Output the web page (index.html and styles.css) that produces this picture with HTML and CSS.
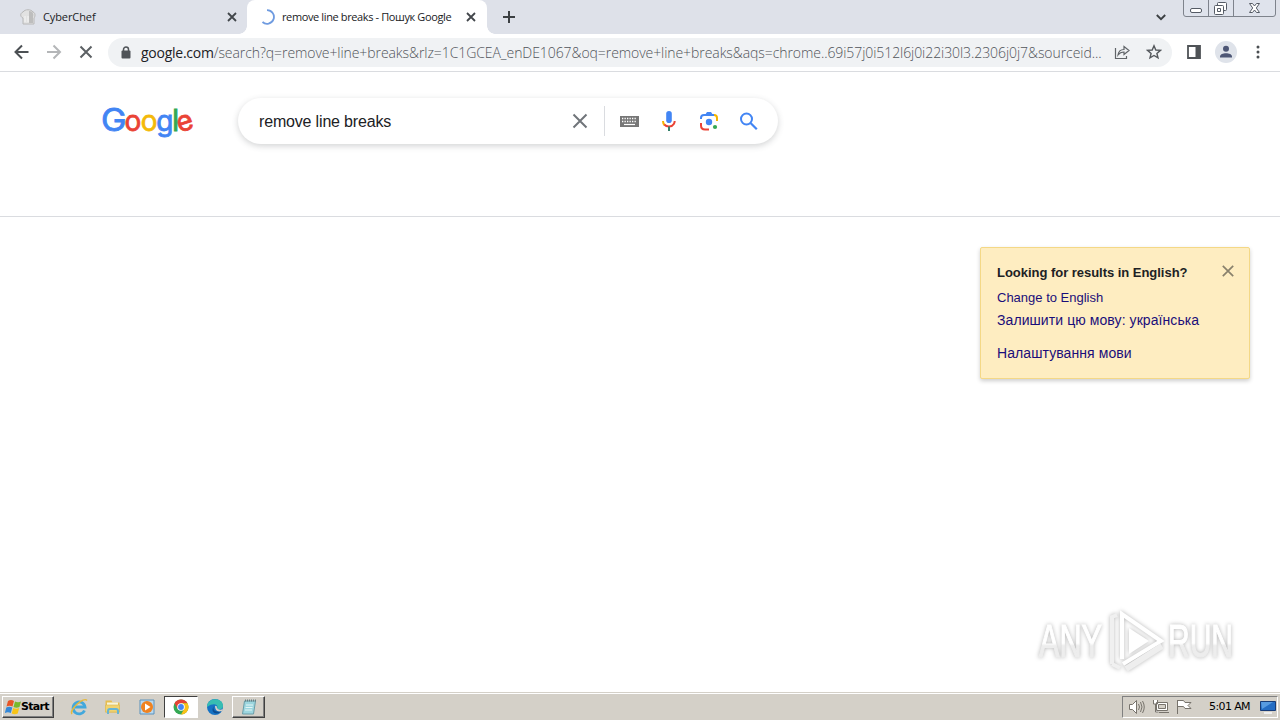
FILE: index.html
```html
<!DOCTYPE html>
<html lang="uk">
<head>
<meta charset="utf-8">
<title>remove line breaks - Пошук Google</title>
<link rel="stylesheet" href="styles.css">
</head>
<body>
<header class="tabs">
  <div class="tab">
    <svg class="fav" width="16" height="16" viewBox="0 0 16 16"><path d="M3 15V9C0 8 0 4 3 3c2-3 8-3 10 0 3 1 2 5 1 6v6z" fill="#e2e2e2" stroke="#b8b8b8"/><path d="M9 2c4 0 5 3 4 6v6H9z" fill="#bdbdbd"/><path d="M5 7v6M8 7v6" stroke="#f5f5f5"/></svg>
    <span class="tab-title cyber">CyberChef</span>
    <svg class="tab-x" width="10" height="10" viewBox="0 0 10 10"><path d="M1 1l8 8M9 1L1 9" stroke="#42464b" stroke-width="1.8"/></svg>
  </div>
  <div class="tab active">
    <svg class="fav" width="16" height="16" viewBox="0 0 16 16"><path d="M8 1.2A6.8 6.8 0 1 1 3.5 13" fill="none" stroke="#6f9be0" stroke-width="1.8"/></svg>
    <span class="tab-title query">remove line breaks - Пошук Google</span>
    <svg class="tab-x" width="10" height="10" viewBox="0 0 10 10"><path d="M1 1l8 8M9 1L1 9" stroke="#42464b" stroke-width="1.8"/></svg>
  </div>
  <svg class="plus" width="12" height="12" viewBox="0 0 12 12"><path d="M6 0v12M0 6h12" stroke="#3c4043" stroke-width="2"/></svg>
  <svg class="chevron" width="10" height="7" viewBox="0 0 10 7"><path d="M.8 1L5 5.2 9.2 1" fill="none" stroke="#3c4043" stroke-width="1.9"/></svg>
  <svg class="win" width="94" height="18" viewBox="0 0 94 18"><path d="M.5 0v14q0 2.500 2.500 2.500h87q2.500 0 2.500-2.500V0M25.500 0v16M50.500 0v16" fill="#dfe3ec" stroke="#7e838c"/><g fill="#fff" stroke="#555b65"><rect x="7.500" y="8.500" width="11" height="4" rx="1.500"/><rect x="34.500" y="2.500" width="9" height="8" rx="1"/><rect x="31.500" y="5.500" width="9" height="9" rx="1"/><path d="M34.500 8.500h3v3h-3z"/><path d="M66.500 3.500h3l2 2.500 2-2.500h3l-3.200 4.500 3.200 4.500h-3l-2-2.500-2 2.500h-3L69.700 8z"/></g></svg>
</header>
<nav class="toolbar">
  <svg class="nav-icons" width="84" height="16" viewBox="0 0 84 16" fill="none" stroke-width="2"><path d="M13.500 8H1M7 1.500L.5 8 7 14.500" stroke="#4c5054"/><path d="M32 8h12.500M38.500 1.500L45 8l-6.500 6.500" stroke="#b4b6b8"/><path d="M65.500 2.500l11 11M76.500 2.500l-11 11" stroke="#5c6064"/></svg>
  <div class="omnibox">
    <svg class="lock" width="10" height="13" viewBox="0 0 10 13"><rect x=".5" y="4.500" width="9" height="8" rx="1" fill="#505458"/><path d="M2.500 5V3.500a2.500 2.500 0 0 1 5 0V5" fill="none" stroke="#505458" stroke-width="1.500"/></svg>
    <span class="url"><b class="host">google.com</b>/search?q=remove+line+breaks&amp;rlz=1C1GCEA_enDE1067&amp;oq=remove+line+breaks&amp;aqs=chrome..69i57j0i512l6j0i22i30l3.2306j0j7&amp;sourceid...</span>
    <svg class="share" width="16" height="16" viewBox="0 0 16 16" fill="none" stroke="#606468" stroke-width="1.200"><path d="M1.500 4v10.500h11V12"/><path d="M4 11c.5-4 3-5.500 6-5.500V2.500l5 4-5 4V8C7 8 5.500 9 4 11z"/></svg>
    <svg class="star" width="16" height="16" viewBox="0 0 16 16"><path d="M8 1.800l1.800 4.200 4.600.4-3.500 3 1.100 4.500L8 11.500l-4 2.400 1.100-4.500-3.500-3 4.600-.4z" fill="none" stroke="#54585c" stroke-width="1.400"/></svg>
  </div>
  <svg class="panel" width="14" height="14" viewBox="0 0 14 14"><path d="M1 1h12v12H1z" fill="#fff" stroke="#4f5357" stroke-width="1.800"/><path d="M8.500 1H13v12H8.500z" fill="#4f5357"/></svg>
  <svg class="avatar" width="22" height="22" viewBox="0 0 22 22"><circle cx="11" cy="11" r="11" fill="#dfe3ea"/><circle cx="11" cy="7.800" r="3" fill="#4d5675"/><path d="M5 16.500v-1c0-4.500 12-4.500 12 0v1z" fill="#4d5675"/></svg>
  <svg class="dots" width="4" height="14" viewBox="0 0 4 14" fill="#4a4e52"><circle cx="2" cy="2" r="1.500"/><circle cx="2" cy="7" r="1.500"/><circle cx="2" cy="12" r="1.500"/></svg>
</nav>
<main class="page">
  <section class="search-head">
    <svg class="logo" width="94" height="36" viewBox="0 0 94 36"><text class="logo-cap" y="26.500" x="-1" textLength="25.500" lengthAdjust="spacingAndGlyphs" fill="#4285f4" stroke="#4285f4">G</text><text y="26.500" x="22.500" fill="#ea4335" stroke="#ea4335">o</text><text y="26.500" x="38.700" fill="#f4b90a" stroke="#f4b90a">o</text><text y="26.500" x="54.300" fill="#4285f4" stroke="#4285f4">g</text><text class="logo-l" y="26.500" x="70" fill="#34a853" stroke="#34a853">l</text><text y="26.500" x="74.500" fill="#ea4335" stroke="#ea4335" transform="rotate(-18 83 18.500)">e</text></svg>
    <div class="search-box">
      <span class="search-text">remove line breaks</span>
      <svg class="search-icons" width="200" height="30" viewBox="0 0 200 30" fill="none">
        <path d="M8.500 8.500l13 13M21.500 8.500l-13 13" stroke="#70757a" stroke-width="2"/>
        <path d="M39.500 0v30" stroke="#dadce0"/>
        <path d="M55 10h19v11H55z" fill="#777"/><path d="M57 12.500h15M57 15.500h15" stroke="#fff" stroke-width="1.300" stroke-dasharray="1.300 1.200"/><path d="M59 18.500h11" stroke="#fff" stroke-width="1.200"/>
        <rect x="101.200" y="5" width="5.600" height="12" rx="2.800" fill="#4285f4"/><path d="M98 15c0 2 .5 3 1.500 4" stroke="#f4b400" stroke-width="2"/><path d="M99.300 18.500c2.500 3 7.500 2.800 9.500-.5.600-1 .9-1.800.9-3" stroke="#ea4335" stroke-width="2"/><path d="M104 20.500V25" stroke="#34806a" stroke-width="2"/>
        <path d="M136 13v-1q0-3 3-3h10" stroke="#4285f4" stroke-width="2"/><path d="M140 9l2-3h4l2 3z" fill="#4285f4"/><path d="M149 9q3 0 3 3v3" stroke="#f4b400" stroke-width="2"/><path d="M136 17v2.500q0 4 4 4h4" stroke="#ea4335" stroke-width="2"/><circle cx="144" cy="16" r="3.200" fill="#4285f4"/><circle cx="150" cy="21" r="2.100" fill="#34a853"/>
        <circle cx="181.500" cy="13" r="5.500" stroke="#4285f4" stroke-width="2"/><path d="M185.500 17l6.300 6.300" stroke="#4285f4" stroke-width="2.200"/>
      </svg>
    </div>
  </section>
  <aside class="lang-card">
    <svg class="card-x" width="12" height="12" viewBox="0 0 12 12"><path d="M.8.800l10.400 10.400M11.200.800L.8 11.200" stroke="#89816c" stroke-width="1.700"/></svg>
    <p class="card-line card-title"><span>Looking for results in English?</span></p>
    <p class="card-line change"><span>Change to English</span></p>
    <p class="card-line keep"><span>Залишити цю мову: українська</span></p>
    <p class="card-line settings"><span>Налаштування мови</span></p>
  </aside>
  <svg class="watermark" width="230" height="76" viewBox="0 0 230 76">
    <defs><linearGradient id="fade" x1="0" y1="0" x2="0" y2="1"><stop offset=".55" stop-color="#fff"/><stop offset=".6" stop-color="#ededed"/></linearGradient></defs>
    <g class="wm"><text x="9" y="54" textLength="63" lengthAdjust="spacingAndGlyphs">ANY</text><text x="138" y="54" textLength="65" lengthAdjust="spacingAndGlyphs">RUN</text>
    <path d="M96 66l36-23" fill="none" stroke="#eee" stroke-width="6"/><path d="M92 56V11l39 27-38 23" fill="none" stroke="#fff" stroke-width="4"/><path d="M82 61V14l5-2M82 61l8 4" fill="none" stroke="#f0f0f0" stroke-width="4"/><path d="M99 25v26l20-13z" fill="#fff"/></g>
  </svg>
</main>
<footer class="taskbar">
  <div class="start"><svg width="17" height="16" viewBox="0 0 17 16"><path d="M3 2q3-2 6 0L7.500 7.500q-3-1.500-6 0z" fill="#e75527"/><path d="M10 2.500q3 1.500 6 0L14.500 8q-3 1.500-6 0z" fill="#78b82c"/><path d="M1.300 8.500q3-1.500 6 0L5.800 14q-3-1.500-6 0z" fill="#3488d8"/><path d="M8.200 9q3 1.500 6 0l-1.500 5.500q-3 1.500-6 0z" fill="#f8c416"/></svg><b class="start-label">Start</b></div>
  <div class="launch ie"><svg width="18" height="18" viewBox="0 0 18 18"><path d="M14.500 12.500A6 6 0 1 1 15 9H5" fill="none" stroke="#42a8dc" stroke-width="2.800"/><path d="M2 16C-1 12 14-2 17 2.500" fill="none" stroke="#e5b93d" stroke-width="1.400"/></svg></div>
  <div class="launch"><svg width="18" height="18" viewBox="0 0 18 18"><path d="M1.500 2.500h6l1 2h7v10h-14z" fill="#e6bd4f"/><path d="M3 4.500h11v3H3z" fill="#f8f5d8"/><path d="M1.500 7h14v7h-14z" fill="#f1d36f" stroke="#d9b650" stroke-width=".6"/><path d="M4 16v-3q0-2 2-2h6q2 0 2 2v3" fill="none" stroke="#65b4d5" stroke-width="2"/></svg></div>
  <div class="launch"><svg width="18" height="18" viewBox="0 0 18 18"><path d="M2 2h14v14H2z" fill="#b9d8ee" stroke="#5b92bd"/><circle cx="9" cy="9" r="6" fill="#ef8220"/><path d="M7 5.500l5.500 3.500L7 12.500z" fill="#fff"/></svg></div>
  <div class="launch pressed"><svg width="18" height="18" viewBox="0 0 18 18"><circle cx="9" cy="9" r="7.500" fill="#34a853"/><path d="M2.500 5.250A7.500 7.500 0 0 1 15.500 5.250H9L5.750 11z" fill="#e54335"/><path d="M15.500 5.250A7.500 7.500 0 0 1 9 16.500l3.250-5.700L9 5.250z" fill="#fbc116"/><circle cx="9" cy="9" r="3.800" fill="#fff"/><circle cx="9" cy="9" r="2.900" fill="#4285f4"/></svg></div>
  <div class="launch edge"><svg width="18" height="18" viewBox="0 0 18 18"><circle cx="9" cy="9" r="8" fill="#1572c4"/><path d="M1 9C1-1 17-1 17 8c0 4-5 4-6 2 2-3-3-6-10-1z" fill="#37bdb2"/><path d="M8 8c-2 4 2 7 7 5-3 5-12 2-7-5z" fill="#0c4d91"/><path d="M9 8q2-1 2 2 2 3 6 1l-1 2q-7 2-7-5z" fill="#d4d0c8"/></svg></div>
  <div class="launch raised"><svg width="18" height="18" viewBox="0 0 18 18"><path d="M4.500 3h11l-2 13h-11z" fill="#9dd6df" stroke="#6a9da8"/><path d="M6 7h7M5.500 9.500h7M5 12h7" stroke="#e3f5f5"/><path d="M5 2.500h11" stroke="#657f84" stroke-width="2" stroke-dasharray="1 1"/></svg></div>
  <div class="tray">
    <svg width="66" height="18" viewBox="0 0 66 18" fill="#fff" stroke="#77736c"><path d="M1.500 6.500h3l4-4v13l-4-4h-3z"/><path d="M10.500 6q2 3 0 6M12.500 4q3 5 0 10M14.500 3q3.500 6 0 12" fill="none"/><path d="M28.500 4.500h11v8h-11zM31 14.500h10M25.500 2v4h4V2M27.500 6v8h3"/><path d="M30.500 6.500h7v4h-7z" fill="#d4d0c8"/><path d="M49.500 2v14M50 2.500h5.500l1.500 2h6l-3 3 3 3h-6l-1.500-2H50"/></svg>
    <span class="clock">5:01 AM</span>
    <svg width="16" height="16" viewBox="0 0 16 16"><path d="M.5 2.500h15v9H.5z" fill="#246dc4" stroke="#173c78"/><path d="M1 3h12L2 10z" fill="#579be1"/><path d="M4 14h8" stroke="#eee" stroke-width="2"/></svg>
  </div>
</footer>
</body>
</html>
```
FILE: styles.css
```css
* { box-sizing: border-box; }
body { margin: 0; width: 1280px; height: 720px; overflow: hidden; display: flex; flex-direction: column; background: #fff; font-family: "Liberation Sans", sans-serif; color: #202124; }
svg { display: block; flex: none; }
.tabs { height: 34px; display: flex; align-items: center; background: #dee1e9; font: 11px/15px "Open Sans", sans-serif; }
.tab { width: 247px; height: 34px; padding: 0 10px 0 20px; display: flex; align-items: center; }
.tab.active { width: 240px; padding: 0 11px 0 12px; background: #fff; border-radius: 8px 8px 0 0; position: relative; }
.tab.active::before, .tab.active::after { content: ""; position: absolute; bottom: 0; width: 8px; height: 8px; }
.tab.active::before { left: -8px; background: radial-gradient(circle at 0 0, transparent 7.5px, #fff 8px); }
.tab.active::after { right: -8px; background: radial-gradient(circle at 100% 0, transparent 7.5px, #fff 8px); }
.tab-title { margin-left: 7px; padding-bottom: 2px; white-space: nowrap; }
.cyber { letter-spacing: -.1px; }
.query { letter-spacing: -.38px; }
.tab-x { margin-left: auto; }
.plus { margin-left: 16px; }
.chevron { margin-left: auto; }
.win { margin-left: 17px; margin-right: 3px; align-self: flex-start; }
.toolbar { height: 38px; border-bottom: 1px solid #dadce0; display: flex; align-items: center; padding: 0 0 1px 15px; background: #fff; }
.nav-icons, .watermark { overflow: visible; }
.omnibox { margin-left: 9px; width: 1064px; height: 29px; border-radius: 15px; background: #f0f2f4; display: flex; align-items: center; padding: 0 10px 0 13px; }
.url { margin-left: 10px; width: 974px; white-space: nowrap; font: 300 14px "Open Sans", sans-serif; color: #50545a; letter-spacing: -.07px; }
.host { font-weight: 400; color: #202124; letter-spacing: -.25px; }
.share { margin-left: -1px; }
.star { margin-left: auto; }
.panel { margin-left: 15px; }
.avatar { margin-left: 14px; }
.dots { margin-left: 19px; }
.page { height: 620px; position: relative; }
.search-head { height: 145px; border-bottom: 1px solid #dadce0; display: flex; align-items: flex-start; padding: 26px 0 0 102px; }
.logo { margin-top: 6px; overflow: visible; font: 28px Inter, sans-serif; stroke-width: .8px; }
.logo-cap { font-size: 31px; }
.logo-l { font-size: 30px; }
.search-box { margin-left: 42px; width: 540px; height: 46px; border-radius: 23px; box-shadow: 0 2px 6px rgba(60,64,67,.23); display: flex; align-items: center; padding-left: 21px; }
.search-text { width: 306px; padding-top: 1px; font-size: 16px; letter-spacing: -.17px; white-space: nowrap; }
.lang-card { position: absolute; left: 980px; top: 175px; width: 270px; height: 132px; padding: 14px 16px; background: #feedc1; border: 1px solid #f4d886; border-radius: 2px; box-shadow: 0 2px 4px rgba(0,0,0,.2); color: #1a0d7a; }
.card-x { position: absolute; right: 15px; top: 17px; }
.card-line { margin: 0; height: 23px; line-height: 23px; font-size: 13px; white-space: nowrap; }
.card-title { height: 24px; font-weight: bold; color: #202124; line-height: 21px; letter-spacing: -.03px; }
.keep, .settings { font-size: 14px; letter-spacing: .08px; }
.settings { margin-top: 10px; }
.watermark { position: absolute; left: 1030px; top: 531px; }
.wm { font: 47px "Liberation Sans", sans-serif; fill: url(#fade); filter: drop-shadow(0 0 2px #b5b5b5); }
.wm text { stroke: url(#fade); stroke-width: 1.2px; }
.taskbar { height: 28px; display: flex; align-items: center; background: #d4d0c8; border-top: 1px solid #d4d0c8; box-shadow: inset 0 1px #fff; padding: 2px 2px 2px; }
.start, .raised { border: 1px solid; border-color: #fff #404040 #404040 #fff; box-shadow: inset -1px -1px #808080; }
.start { width: 52px; height: 22px; display: flex; align-items: center; padding-left: 2px; color: #000; }
.start-label { font: bold 11px "DejaVu Sans", sans-serif; letter-spacing: -.7px; margin-left: -1px; }
.launch { width: 34px; height: 22px; display: flex; align-items: center; justify-content: center; }
.ie { margin-left: 8px; }
.pressed { background: #fff; border: 1px solid; border-color: #404040 #fff #fff #404040; }
.raised { width: 33px; }
.tray { margin-left: auto; width: 156px; height: 22px; border: 1px solid; border-color: #808080 #fff #fff #808080; display: flex; align-items: center; padding: 0 0 0 5px; }
.clock { margin-left: 15px; width: 51px; font: 11px "DejaVu Sans", sans-serif; color: #000; letter-spacing: -.6px; white-space: nowrap; }
```
